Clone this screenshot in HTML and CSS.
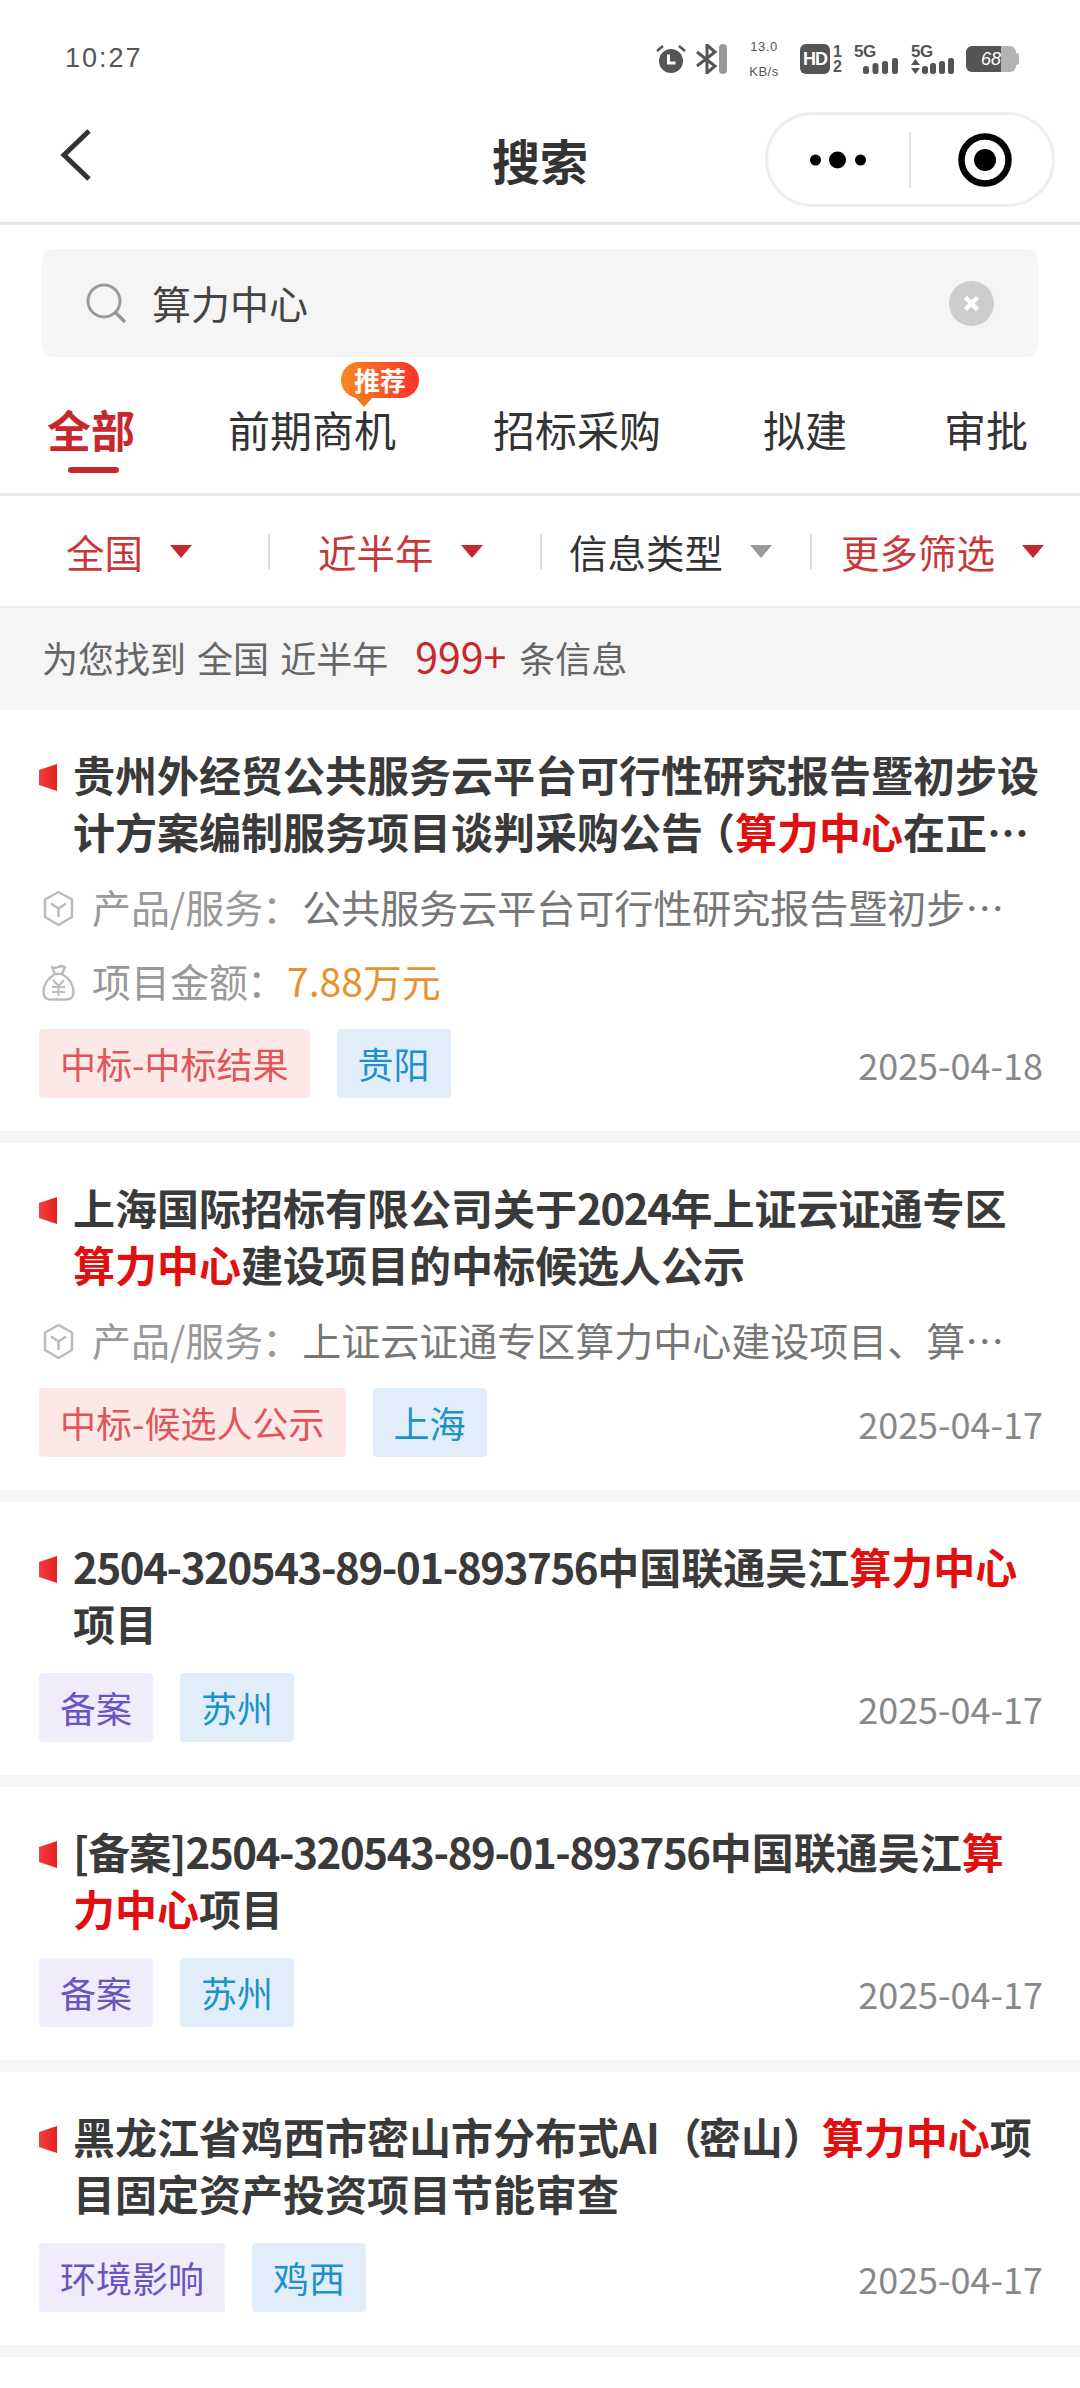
FILE: index.html
```html
<!DOCTYPE html>
<html lang="zh-CN">
<head>
<meta charset="utf-8">
<title>搜索</title>
<link rel="stylesheet" href="styles.css">
</head>
<body>
<div class="status">
  <span class="clock">10:27</span>
  <div class="sicons">
    <svg class="s-alarm" width="30" height="28" viewBox="0 0 30 28"><circle cx="15" cy="16" r="12" fill="#555"/><path d="M12.5 9.5v8.5h7" stroke="#fff" stroke-width="3" fill="none"/><path d="M1 6l6-5M29 6l-6-5" stroke="#555" stroke-width="2.5"/></svg>
    <svg class="s-bt" width="31" height="30" viewBox="0 0 31 30"><path d="M1 8l18 14-8 7V1l8 7L1 22" stroke="#555" stroke-width="3" fill="none"/><rect x="23" y="0" width="8" height="30" rx="4" fill="#999"/></svg>
    <div class="speed"><span>13.0</span><span>KB/s</span></div>
    <div class="hd"><span class="hdbox">HD</span><span class="hdnum"><span>1</span><span>2</span></span></div>
    <div class="net"><span class="g">5G</span><svg class="bars1" width="35" height="16" viewBox="0 0 35 16"><rect x="0" y="8" width="6" height="8" rx="2.5"/><rect x="9.5" y="5" width="6" height="11" rx="2.5"/><rect x="19" y="3" width="6" height="13" rx="2.5"/><rect x="29" y="0" width="6" height="16" rx="2.5"/></svg></div>
    <div class="net n2"><span class="g">5G</span><svg width="43" height="16" viewBox="0 0 43 16"><path d="M0 7l4.500-6 4.500 6zM0 10h9l-4.500 6z"/><rect x="11" y="8" width="6" height="8" rx="2.500"/><rect x="19" y="5" width="6" height="11" rx="2.500"/><rect x="28" y="3" width="6" height="13" rx="2.500"/><rect x="37" y="0" width="6" height="16" rx="2.500"/></svg></div>
    <div class="bat"><span class="batf">68</span><span class="batr"></span><span class="batn"></span></div>
  </div>
</div>

<header class="nav">
  <svg class="back" width="32" height="54" viewBox="0 0 32 54"><path d="M29 3L4 27l25 24" stroke="#333" stroke-width="5" fill="none"/></svg>
  <h1 class="title">搜索</h1>
  <div class="capsule">
    <svg class="dots" width="56" height="18" viewBox="0 0 56 18"><circle cx="5.500" cy="9" r="5.500" fill="#000"/><circle cx="27.500" cy="9" r="8.500" fill="#000"/><circle cx="50.500" cy="9" r="5.500" fill="#000"/></svg>
    <span class="capdiv"></span>
    <svg width="54" height="54" viewBox="0 0 54 54"><circle cx="27" cy="27" r="23.500" stroke="#000" stroke-width="6.500" fill="none"/><circle cx="27" cy="27" r="11" fill="#000"/></svg>
  </div>
</header>

<div class="searchwrap">
  <div class="search">
    <svg width="40" height="40" viewBox="0 0 40 40"><circle cx="18" cy="18" r="16" stroke="#999" stroke-width="3" fill="none"/><path d="M30 30l8 8" stroke="#999" stroke-width="3.500" stroke-linecap="round"/></svg>
    <span class="q">算力中心</span>
    <svg class="clear" width="45" height="45" viewBox="0 0 45 45"><circle cx="22.500" cy="22.500" r="22.500" fill="#cdcdcd"/><path d="M16.500 16.500l12 12M28.500 16.500l-12 12" stroke="#fff" stroke-width="4.500"/></svg>
  </div>
</div>

<nav class="tabs">
  <div class="tab on">全部<i class="bar"></i></div>
  <div class="tab">前期商机<span class="badge">推荐</span></div>
  <div class="tab">招标采购</div>
  <div class="tab">拟建</div>
  <div class="tab">审批</div>
</nav>

<div class="filters">
  <div class="f w1 red">全国<i class="tri"></i></div>
  <div class="f w2 red">近半年<i class="tri"></i></div>
  <div class="f w3">信息类型<i class="tri"></i></div>
  <div class="f w4 red">更多筛选<i class="tri"></i></div>
</div>

<div class="summary">为您找到 全国 近半年<b>999+</b>条信息</div>

<article class="card">
  <h2 class="ct">贵州外经贸公共服务云平台可行性研究报告暨初步设计方案编制服务项目谈判采购公告<span class="p1">（</span><em>算力中心</em>在正式招标前的可行性研究<span class="p">）</span></h2>
  <div class="row first"><svg class="ico" width="33" height="37" viewBox="0 0 33 37"><path d="M16.500 2L30 9.500V27l-13.500 8L3 27V9.500zM9 13.500l7.500 5 7.500-5M16.500 18.500V27" stroke="#bbb" stroke-width="2.500" stroke-linejoin="round" fill="none"/></svg><span class="one"><span class="lab">产品/服务<span class="colon">：</span></span>公共服务云平台可行性研究报告暨初步设计方案编制服务项目</span></div>
  <div class="row"><svg class="ico" width="33" height="37" viewBox="0 0 33 37"><path d="M10 3c2 1 4 1 6 0s5-1 7 0l-3 7h-7zM13 10C6 14 1.500 21 1.500 28c0 5 3 7.500 7 7.500h16c4 0 7-2.500 7-7.500 0-7-4.500-14-11.500-18z" stroke="#bbb" stroke-width="2.500" stroke-linejoin="round" fill="none"/><path d="M11 16l5.500 6 5.500-6M10 23h13M10 28h13M16.500 22v10" stroke="#bbb" stroke-width="2" fill="none"/></svg><span class="lab">项目金额<span class="colon">：</span></span><span class="amt">7.88万元</span></div>
  <div class="foot"><span class="tag pink">中标-中标结果</span><span class="tag blue">贵阳</span><time>2025-04-18</time></div>
</article>

<article class="card">
  <h2 class="ct">上海国际招标有限公司关于<span class="n">2024</span>年上证云证通专区<em>算力中心</em>建设项目的中标候选人公示</h2>
  <div class="row first"><svg class="ico" width="33" height="37" viewBox="0 0 33 37"><path d="M16.500 2L30 9.500V27l-13.500 8L3 27V9.500zM9 13.500l7.500 5 7.500-5M16.500 18.500V27" stroke="#bbb" stroke-width="2.500" stroke-linejoin="round" fill="none"/></svg><span class="one"><span class="lab">产品/服务<span class="colon">：</span></span>上证云证通专区算力中心建设项目、算力中心设备采购及相关配套服务</span></div>
  <div class="foot"><span class="tag pink">中标-候选人公示</span><span class="tag blue">上海</span><time>2025-04-17</time></div>
</article>

<article class="card short">
  <h2 class="ct"><span class="n">2504-320543-89-01-893756</span>中国联通吴江<em>算力中心</em>项目</h2>
  <div class="foot"><span class="tag purple">备案</span><span class="tag blue">苏州</span><time>2025-04-17</time></div>
</article>

<article class="card short">
  <h2 class="ct"><span class="br">[备案]</span><span class="n">2504-320543-89-01-893756</span>中国联通吴江<em>算力中心</em>项目</h2>
  <div class="foot"><span class="tag purple">备案</span><span class="tag blue">苏州</span><time>2025-04-17</time></div>
</article>

<article class="card short">
  <h2 class="ct">黑龙江省鸡西市密山市分布式AI<span class="p">（</span>密山<span class="p">）</span><em>算力中心</em>项目固定资产投资项目节能审查</h2>
  <div class="foot"><span class="tag purple">环境影响</span><span class="tag blue">鸡西</span><time>2025-04-17</time></div>
</article>
</body>
</html>
```
FILE: styles.css
```css
* { box-sizing: border-box; margin: 0; padding: 0; }
html, body { background: #fff; }
body { width: 1080px; height: 2388px; overflow: hidden; font-family: "Noto Sans CJK SC", "Noto Sans", sans-serif; color: #333; }

.status { height: 100px; display: flex; align-items: center; justify-content: space-between; padding: 17px 61px 0 65px; }
.clock { font-size: 27px; letter-spacing: 2px; color: #555; font-family: "Liberation Sans", sans-serif; }
.sicons { display: flex; align-items: center; }
.s-alarm { margin-right: 10px; }
.s-bt { margin-right: 19px; }
.speed { display: flex; flex-direction: column; align-items: center; width: 36px; margin-right: 18px; font: 13px/25px "Liberation Sans", sans-serif; color: #555; letter-spacing: .5px; white-space: nowrap; }
.hd { display: flex; align-items: center; margin-right: 12px; }
.hdbox { width: 30px; height: 30px; border-radius: 6px; background: #555; color: #fff; font: 700 18px/30px "Liberation Sans", sans-serif; text-align: center; letter-spacing: -1px; }
.hdnum { display: flex; flex-direction: column; width: 12px; color: #555; font: 700 16px/15px "Liberation Sans", sans-serif; text-align: right; }
.net { display: flex; flex-direction: column; width: 44px; margin-right: 13px; color: #555; }
.net svg { fill: #555; display: block; margin-top: -2px; }
.net .bars1 { margin-left: 9px; }
.net.n2 { width: 43px; margin-right: 12px; }
.g { font: 700 17px/16px "Liberation Sans", sans-serif; letter-spacing: -.5px; }
.bat { display: flex; align-items: center; height: 26px; }
.batf { width: 35px; height: 26px; background: #555; color: #fff; font: italic 18px/26px "Liberation Sans", sans-serif; text-align: right; border-radius: 6px 0 0 6px; white-space: nowrap; }
.batr { width: 15px; height: 26px; background: #b3b3b3; border-radius: 0 6px 6px 0; }
.batn { width: 3px; height: 12px; background: #b3b3b3; border-radius: 0 3px 3px 0; }

.nav { height: 125px; border-bottom: 3px solid #e5e5e5; position: relative; display: flex; align-items: center; justify-content: center; }
.back { position: absolute; left: 60px; top: 28px; }
.title { font-size: 48px; font-weight: 700; color: #333; line-height: 1; margin-bottom: 5px; }
.capsule { position: absolute; right: 25px; top: 12px; width: 290px; height: 95px; border: 3px solid #eee; border-radius: 48px; display: flex; align-items: center; padding-left: 42px; }
.capdiv { width: 2px; height: 56px; background: #e2e2e2; margin: 0 47px 0 43px; }

.searchwrap { padding: 24px 42px 0 42px; height: 132px; }
.search { height: 108px; background: #f5f5f5; border-radius: 12px; display: flex; align-items: center; padding: 0 44px 0 44px; }
.q { font-size: 39px; color: #444; margin-left: 26px; flex: 1; margin-bottom: 2px; }

.tabs { height: 139px; border-bottom: 3px solid #e8e8e8; display: flex; align-items: flex-start; padding: 42px 0 0 47px; }
.tab { position: relative; font-size: 42px; color: #333; line-height: 60px; white-space: nowrap; }
.tab:nth-child(2) { margin-left: 93px; }
.tab:nth-child(3) { margin-left: 97px; }
.tab:nth-child(4) { margin-left: 102px; }
.tab:nth-child(5) { margin-left: 97px; }
.tab.on { color: #c8282d; font-weight: 700; font-size: 44px; }
.bar { position: absolute; left: 21px; top: 68px; width: 51px; height: 6px; border-radius: 3px; background: #c8282d; }
.badge { position: absolute; left: 113px; top: -37px; width: 78px; height: 36px; border-radius: 18px; background: linear-gradient(90deg, #f58a1f, #f8302c); color: #fff; font-size: 26px; line-height: 36px; font-weight: 700; text-align: center; }
.badge::after { content: ""; position: absolute; left: 13px; top: 34px; border-left: 10px solid transparent; border-right: 10px solid transparent; border-top: 11px solid #f3771f; }

.filters { height: 110px; display: flex; align-items: center; }
.f { display: flex; align-items: center; font-size: 38.500px; color: #333; height: 36px; line-height: 36px; border-right: 2px solid #ddd; white-space: nowrap; }
.f:last-child { border-right: 0; }
.f.red { color: #c8383a; }
.tri { width: 0; height: 0; border-left: 11.500px solid transparent; border-right: 11.500px solid transparent; border-top: 13px solid #c8282d; margin-left: 27px; }
.f:nth-child(3) .tri { border-top-color: #999; }
.w1 { width: 270px; padding-left: 66px; }
.w2 { width: 272px; padding-left: 48px; }
.w3 { width: 270px; padding-left: 27px; }
.w4 { width: 268px; padding-left: 29px; }

.summary { height: 104px; background: #f5f5f5; border-top: 2px solid #eee; padding-left: 42px; font-size: 36px; line-height: 95px; color: #666; word-spacing: 3px; white-space: pre; }
.summary b { font-weight: 400; color: #c8282d; font-size: 41px; margin: 0 13px 0 27px; }

.card { border-bottom: 12px solid #f5f5f5; padding: 35px 37px 33px 39px; position: relative; }
.card::before { content: ""; position: absolute; left: 39px; top: 54px; width: 18px; height: 27px; background: linear-gradient(90deg, #f04040, #e62020); clip-path: polygon(0 22%, 100% 0, 100% 100%, 0 78%); }
.ct { margin: 0 3px 0 34px; font-size: 42px; line-height: 57px; font-weight: 700; color: #3a3a3a; display: -webkit-box; -webkit-line-clamp: 2; -webkit-box-orient: vertical; overflow: hidden; }
.ct em { font-style: normal; color: #e01010; font-weight: 700; }
.n { letter-spacing: -1.400px; }
.br { letter-spacing: -.800px; }
.p { letter-spacing: -3px; }
.p1 { margin-left: -10px; }
.row { display: flex; align-items: center; height: 74px; margin-right: 3px; padding-bottom: 5px; font-size: 39px; }
.row.first { margin-top: 12px; }
.ico { flex: none; margin: 5px 17px 0 3px; }
.one { overflow: hidden; text-overflow: ellipsis; white-space: nowrap; color: #777; }
.lab { color: #999; }
.colon { font-family: "Noto Sans CJK TC", sans-serif; margin: 0 1px 0 -1px; }
.amt { color: #e8912d; }
.foot { display: flex; align-items: center; gap: 27px; margin-top: 10px; }
.short .foot { margin-top: 22px; }
.tag { height: 69px; line-height: 69px; padding: 0 21px; font-size: 36px; border-radius: 4px; white-space: nowrap; }
.pink { background: #fde8e8; color: #e0555a; }
.blue { background: #e1eef9; color: #1b92c8; }
.purple { background: #f0ecfb; color: #6a55c0; }
time { margin-left: auto; font-size: 36px; color: #888; }
```
